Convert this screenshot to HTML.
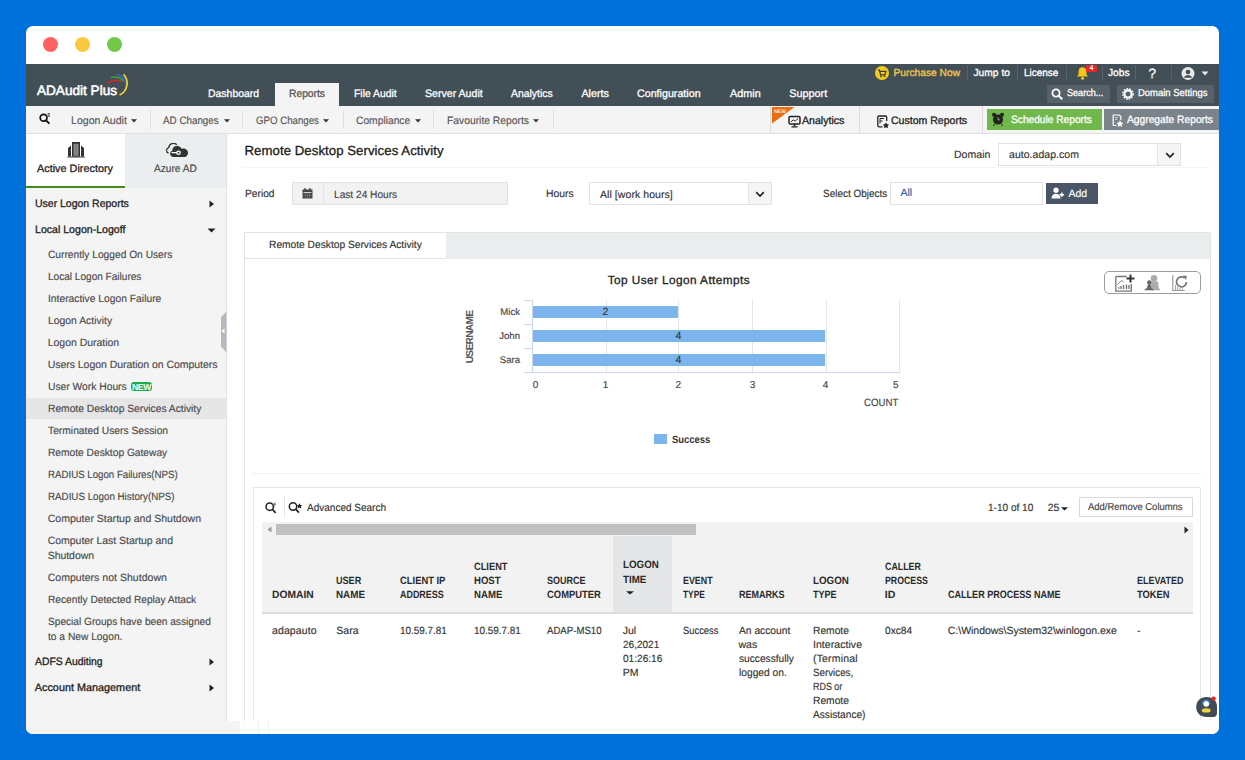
<!DOCTYPE html><html><head><meta charset="utf-8"><style>
*{box-sizing:border-box;margin:0;padding:0}
html,body{width:1245px;height:760px;overflow:hidden}
body{background:#0070DA;font-family:"Liberation Sans",sans-serif;position:relative;text-rendering:geometricPrecision}
.b{position:absolute;display:block}
.t{position:absolute;white-space:nowrap;line-height:normal}
#pg{position:absolute;left:0;top:0;width:1245px;height:760px;clip-path:inset(26px round 7px)}

</style></head><body>
<div class="b" style="left:26px;top:26px;width:1193px;height:708px;background:#fff;border-radius:7px"></div>
<div id="pg">
<div class="b" style="left:43px;top:37px;width:15px;height:15px;border-radius:50%;background:#FF6162"></div>
<div class="b" style="left:75px;top:37px;width:15px;height:15px;border-radius:50%;background:#FBC93F"></div>
<div class="b" style="left:107px;top:37px;width:15px;height:15px;border-radius:50%;background:#73C84A"></div>
<div class="b" style="left:26px;top:64px;width:1193px;height:42px;background:#434F56"></div>
<div class="b" style="left:275px;top:83px;width:64px;height:23px;background:#F4F4F4"></div>
<svg class="b" style="left:100px;top:68px;" width="34" height="30" viewBox="0 0 34 30">
<path d="M7.5 15.5 A 12 10 0 0 1 22 13.5" stroke="#D42A25" stroke-width="1.6" fill="none"/>
<path d="M11 9.5 A 13 11 0 0 1 24.5 13.5" stroke="#3C9C3A" stroke-width="1.6" fill="none"/>
<path d="M17 6 A 14 14 0 0 1 26.3 21" stroke="#2F6DC0" stroke-width="1.6" fill="none"/>
<path d="M23.6 6.3 A 13 13 0 0 1 19.6 27" stroke="#F3D02A" stroke-width="1.7" fill="none"/>
</svg>
<svg class="b" style="left:875px;top:66px;" width="14" height="14" viewBox="0 0 14 14"><circle cx="7" cy="7" r="7" fill="#F4CD1A"/><path d="M3 4.2h1.4l1.2 4.6h4.3l1-3.4H5" stroke="#3a3a3a" stroke-width="1.3" fill="none"/><circle cx="6" cy="10.3" r="0.9" fill="#3a3a3a"/><circle cx="9.5" cy="10.3" r="0.9" fill="#3a3a3a"/></svg>
<div class="b" style="left:967px;top:65px;width:1px;height:16px;background:#56616A"></div>
<div class="b" style="left:1017px;top:65px;width:1px;height:16px;background:#56616A"></div>
<div class="b" style="left:1066px;top:65px;width:1px;height:16px;background:#56616A"></div>
<div class="b" style="left:1102px;top:65px;width:1px;height:16px;background:#56616A"></div>
<div class="b" style="left:1135px;top:65px;width:1px;height:16px;background:#56616A"></div>
<div class="b" style="left:1171px;top:65px;width:1px;height:16px;background:#56616A"></div>
<svg class="b" style="left:1076px;top:66px;" width="13" height="14" viewBox="0 0 13 14"><path d="M6.5 1.2c-2.6 0-4 2-4 4.4v3L1 10.6h11L10.5 8.6v-3c0-2.4-1.4-4.4-4-4.4z" fill="#F5C518"/><circle cx="6.5" cy="12.2" r="1.5" fill="#F5C518"/></svg>
<div class="b" style="left:1086px;top:65px;width:11px;height:7px;background:#E5262A;border-radius:1px"></div>
<svg class="b" style="left:1181px;top:67px;" width="14" height="13" viewBox="0 0 14 13"><circle cx="7" cy="6.5" r="6.5" fill="#E8E8E8"/><circle cx="7" cy="5" r="2.3" fill="#444E56"/><path d="M2.8 10.8c1-2 2.4-2.8 4.2-2.8s3.2.8 4.2 2.8" fill="#444E56"/></svg>
<svg class="b" style="left:1201px;top:71px;" width="8" height="5" viewBox="0 0 8 5"><path d="M0.5 0.5h7L4 4.5z" fill="#E8E8E8"/></svg>
<div class="b" style="left:1047px;top:85px;width:63px;height:18px;background:#56616A;border-radius:1px"></div>
<svg class="b" style="left:1051px;top:88px;" width="13" height="13" viewBox="0 0 13 13"><circle cx="5" cy="5" r="3.6" stroke="#fff" stroke-width="1.8" fill="none"/><path d="M7.6 7.6l3.6 3.6" stroke="#fff" stroke-width="2"/></svg>
<div class="b" style="left:1117px;top:85px;width:97px;height:18px;background:#56616A;border-radius:1px"></div>
<svg class="b" style="left:1122px;top:88px;" width="12" height="12" viewBox="0 0 12 12"><circle cx="6" cy="6" r="3.6" stroke="#fff" stroke-width="2.2" fill="none"/><circle cx="6" cy="6" r="5.2" stroke="#fff" stroke-width="1.4" stroke-dasharray="1.6 1.2" fill="none"/></svg>
<div class="b" style="left:26px;top:106px;width:1193px;height:28px;background:#F4F4F4;border-bottom:1px solid #E0E0E0"></div>
<svg class="b" style="left:39px;top:113px;" width="12" height="12" viewBox="0 0 12 12"><circle cx="4.6" cy="4.8" r="3.4" stroke="#111" stroke-width="1.7" fill="none"/><path d="M7 7.3l3.4 3.4" stroke="#111" stroke-width="1.9"/><path d="M8.6 0.6h2.2M8.6 2h2.2M9.3 3.4h1.5" stroke="#111" stroke-width="0.8"/></svg>
<svg class="b" style="left:131px;top:119px;" width="6" height="4" viewBox="0 0 6 4"><path d="M0 0.3h6L3.0 3.6z" fill="#333"/></svg>
<svg class="b" style="left:224px;top:119px;" width="6" height="4" viewBox="0 0 6 4"><path d="M0 0.3h6L3.0 3.6z" fill="#333"/></svg>
<svg class="b" style="left:323px;top:119px;" width="6" height="4" viewBox="0 0 6 4"><path d="M0 0.3h6L3.0 3.6z" fill="#333"/></svg>
<svg class="b" style="left:415px;top:119px;" width="6" height="4" viewBox="0 0 6 4"><path d="M0 0.3h6L3.0 3.6z" fill="#333"/></svg>
<svg class="b" style="left:533px;top:119px;" width="6" height="4" viewBox="0 0 6 4"><path d="M0 0.3h6L3.0 3.6z" fill="#333"/></svg>
<div class="b" style="left:150px;top:110px;width:1px;height:19px;background:#E0E0E0"></div>
<div class="b" style="left:242px;top:110px;width:1px;height:19px;background:#E0E0E0"></div>
<div class="b" style="left:343px;top:110px;width:1px;height:19px;background:#E0E0E0"></div>
<div class="b" style="left:433px;top:110px;width:1px;height:19px;background:#E0E0E0"></div>
<div class="b" style="left:553px;top:110px;width:1px;height:19px;background:#E0E0E0"></div>
<div class="b" style="left:770px;top:106px;width:1px;height:27px;background:#DEDEDE"></div>
<div class="b" style="left:859px;top:106px;width:1px;height:27px;background:#DEDEDE"></div>
<div class="b" style="left:982px;top:106px;width:1px;height:27px;background:#DEDEDE"></div>
<svg class="b" style="left:772px;top:107px;" width="23" height="17" viewBox="0 0 23 17"><path d="M0 0H22.5L0 16.6z" fill="#EC6D0E"/><text x="2.2" y="6" font-family="Liberation Sans" font-size="5" font-weight="700" fill="#fff" opacity="0.9">NEW</text></svg>
<svg class="b" style="left:788px;top:115px;" width="13" height="13" viewBox="0 0 13 13"><rect x="1" y="1.5" width="11" height="7.5" rx="1.3" stroke="#222" stroke-width="1.5" fill="none"/><path d="M3 7l2.2-2.2 2 1.4 2.8-2.8" stroke="#222" stroke-width="1" fill="none"/><path d="M6.5 9v2.5" stroke="#222" stroke-width="1.6"/><path d="M3.5 11.8h6" stroke="#222" stroke-width="1.3"/></svg>
<svg class="b" style="left:877px;top:115px;" width="12" height="13" viewBox="0 0 12 13"><path d="M5.5 11.8H2a1.2 1.2 0 0 1-1.2-1.2V2.2A1.2 1.2 0 0 1 2 1h6.5a1.2 1.2 0 0 1 1.2 1.2V6" stroke="#222" stroke-width="1.3" fill="none"/><path d="M3 3.5h4M3 3.5v5M3 6h2.5" stroke="#222" stroke-width="1"/><path d="M9 7.2l1.05 2.1 2.2.3-1.6 1.5.4 2.2-2.05-1.1-2.05 1.1.4-2.2-1.6-1.5 2.2-.3z" fill="#222"/></svg>
<div class="b" style="left:987px;top:109px;width:115px;height:21px;background:#70B84C"></div>
<svg class="b" style="left:991px;top:112px;" width="14" height="14" viewBox="0 0 14 14"><circle cx="7" cy="7.6" r="5" fill="#222"/><circle cx="3" cy="2.8" r="2" fill="#222"/><circle cx="11" cy="2.8" r="2" fill="#222"/><path d="M7 5.2v2.6h2" stroke="#70B84C" stroke-width="1" fill="none"/><path d="M3.5 12.5l-1 1.2M10.5 12.5l1 1.2" stroke="#222" stroke-width="1.2"/></svg>
<div class="b" style="left:1104px;top:109px;width:115px;height:21px;background:#7A8389"></div>
<svg class="b" style="left:1112px;top:114px;" width="12" height="13" viewBox="0 0 12 13"><path d="M4.5 11.5H1.2V1h6l1.6 1.6v3.5" stroke="#fff" stroke-width="1.2" fill="none"/><path d="M3 3.5h3M3 5.5h2" stroke="#ddd" stroke-width="0.9"/><path d="M8 6.3l1.2 2.3 2.4.3-1.8 1.7.4 2.4-2.2-1.2-2.2 1.2.4-2.4-1.8-1.7 2.4-.3z" fill="#fff"/></svg>
<div class="b" style="left:26px;top:134px;width:200px;height:600px;background:#F4F4F4"></div>
<div class="b" style="left:226px;top:134px;width:1px;height:587px;background:#E3E3E3"></div>
<div class="b" style="left:26px;top:134px;width:99px;height:54px;background:#fff"></div>
<div class="b" style="left:26px;top:186px;width:99px;height:2px;background:#3E8E1E"></div>
<div class="b" style="left:125px;top:134px;width:101px;height:54px;background:#EAEEEF"></div>
<svg class="b" style="left:66px;top:141px;" width="20" height="17" viewBox="0 0 20 17"><path d="M2 7L5 4.4V15.6H2z" fill="#333"/><path d="M18 7L15 4.4V15.6H18z" fill="#333"/><rect x="6" y="1" width="8" height="14.6" fill="#333"/><rect x="7.6" y="2.8" width="4.8" height="12" fill="#9a9a9a"/><path d="M9.2 3v12M10.8 3v12" stroke="#555" stroke-width="0.6"/><path d="M1.5 16h17.2" stroke="#333" stroke-width="1.2"/></svg>
<svg class="b" style="left:165px;top:143px;" width="23" height="15" viewBox="0 0 23 15"><path d="M3.6 10.2a2.9 2.9 0 0 1 .2-5.6a4.6 4.6 0 0 1 8-2.8" stroke="#333" stroke-width="1.3" fill="none"/><path d="M8.2 14a3.2 3.2 0 0 1-1-6.2a5 5 0 0 1 9.5-2a4.2 4.2 0 0 1 3.6 8.2z" fill="#333"/><path d="M6.5 9.7h6" stroke="#fff" stroke-width="1.3"/><circle cx="13.5" cy="9.7" r="2.3" fill="#fff"/><circle cx="13.5" cy="9.7" r="1" fill="#333"/></svg>
<svg class="b" style="left:209px;top:200px;" width="6" height="8" viewBox="0 0 6 8"><path d="M0.5 0.5L5 4L0.5 7.5z" fill="#222"/></svg>
<svg class="b" style="left:207px;top:228px;" width="9" height="5" viewBox="0 0 9 5"><path d="M0.5 0.5h8L4.5 4.5z" fill="#222"/></svg>
<div class="b" style="left:26px;top:398px;width:200px;height:21px;background:#E6E6E6"></div>
<div class="b" style="left:131px;top:382px;width:21px;height:9px;background:#1DAE4B;border-radius:3px"></div>
<svg class="b" style="left:209px;top:658px;" width="6" height="8" viewBox="0 0 6 8"><path d="M0.5 0.5L5 4L0.5 7.5z" fill="#222"/></svg>
<svg class="b" style="left:209px;top:684px;" width="6" height="8" viewBox="0 0 6 8"><path d="M0.5 0.5L5 4L0.5 7.5z" fill="#222"/></svg>
<svg class="b" style="left:220px;top:311px;" width="7" height="42" viewBox="0 0 7 42"><path d="M1 6L6.5 0.5V41.5L1 35.5z" fill="#B3BAC1"/><path d="M4.5 17.5v5l-3-2.5z" fill="#fff"/></svg>
<div class="b" style="left:242px;top:167px;width:968px;height:1px;background:#F4F4F4"></div>
<div class="b" style="left:292px;top:182px;width:216px;height:23px;background:#F2F2F2;border:1px solid #E2E2E2"></div>
<div class="b" style="left:323px;top:183px;width:1px;height:21px;background:#E2E2E2"></div>
<svg class="b" style="left:302px;top:188px;" width="11" height="11" viewBox="0 0 11 11"><rect x="0.5" y="1.5" width="10" height="9" fill="#444"/><path d="M3 0v3M8 0v3" stroke="#444" stroke-width="1.3"/><path d="M1.5 4.5h8" stroke="#F2F2F2" stroke-width="0.8"/><path d="M3.5 5v5M5.5 5v5M7.5 5v5M1 7.3h9" stroke="#888" stroke-width="0.5"/></svg>
<div class="b" style="left:589px;top:182px;width:183px;height:23px;background:#fff;border:1px solid #E2E2E2"></div>
<div class="b" style="left:748px;top:183px;width:23px;height:21px;background:#F5F5F5;border-left:1px solid #E5E5E5"></div>
<svg class="b" style="left:755px;top:191px;" width="10" height="7" viewBox="0 0 10 7"><path d="M1.2 1.2L5 5L8.8 1.2" stroke="#222" stroke-width="1.7" fill="none"/></svg>
<div class="b" style="left:998px;top:143px;width:183px;height:23px;background:#fff;border:1px solid #E2E2E2"></div>
<div class="b" style="left:1157px;top:144px;width:23px;height:21px;background:#F5F5F5;border-left:1px solid #E5E5E5"></div>
<svg class="b" style="left:1165px;top:152px;" width="10" height="7" viewBox="0 0 10 7"><path d="M1.2 1.2L5 5L8.8 1.2" stroke="#222" stroke-width="1.7" fill="none"/></svg>
<div class="b" style="left:890px;top:182px;width:153px;height:23px;background:#fff;border:1px solid #E2E2E2"></div>
<div class="b" style="left:1046px;top:183px;width:52px;height:21px;background:#4A5667"></div>
<svg class="b" style="left:1051px;top:187px;" width="14" height="12" viewBox="0 0 14 12"><circle cx="5" cy="3.2" r="2.6" fill="#fff"/><path d="M0.5 11.5c0-3 2-4.8 4.5-4.8s4.5 1.8 4.5 4.8z" fill="#fff"/><path d="M10.8 5.5v4.5M8.6 7.8h4.5" stroke="#fff" stroke-width="1.4"/></svg>
<div class="b" style="left:244px;top:232px;width:967px;height:528px;border:1px solid #E3E3E3;background:#fff"></div>
<div class="b" style="left:446px;top:232px;width:765px;height:27px;background:#EAEEEF;border-top:1px solid #E3E3E3;border-right:1px solid #E3E3E3"></div>
<div class="b" style="left:244px;top:258px;width:202px;height:1px;background:#E3E3E3"></div>
<div class="b" style="left:606px;top:300px;width:1px;height:72px;background:#E6E6E6"></div>
<div class="b" style="left:678px;top:300px;width:1px;height:72px;background:#E6E6E6"></div>
<div class="b" style="left:752px;top:300px;width:1px;height:72px;background:#E6E6E6"></div>
<div class="b" style="left:826px;top:300px;width:1px;height:72px;background:#E6E6E6"></div>
<div class="b" style="left:899px;top:300px;width:1px;height:72px;background:#E6E6E6"></div>
<div class="b" style="left:532px;top:300px;width:1px;height:73px;background:#CCD6EB"></div>
<div class="b" style="left:524px;top:372px;width:376px;height:1px;background:#CCD6EB"></div>
<div class="b" style="left:524px;top:300px;width:8px;height:1px;background:#CCD6EB"></div>
<div class="b" style="left:524px;top:324px;width:8px;height:1px;background:#CCD6EB"></div>
<div class="b" style="left:524px;top:348px;width:8px;height:1px;background:#CCD6EB"></div>
<div class="b" style="left:533px;top:306px;width:145px;height:12px;background:#7CB5EC"></div>
<div class="b" style="left:533px;top:330px;width:292px;height:12px;background:#7CB5EC"></div>
<div class="b" style="left:533px;top:354px;width:292px;height:12px;background:#7CB5EC"></div>
<div class="t" style="left:470.5px;top:336.5px;font-size:10.2px;font-weight:700;color:#555;transform:translate(-50%,-50%) rotate(-90deg);line-height:10px;letter-spacing:-0.7px">USERNAME</div>
<div class="b" style="left:654px;top:434px;width:13px;height:10px;background:#7CB5EC"></div>
<div class="b" style="left:1104px;top:271px;width:97px;height:23px;border:1px solid #9C9C9C;border-radius:5px"></div>
<svg class="b" style="left:1115px;top:274px;" width="21" height="18" viewBox="0 0 21 18"><path d="M0.8 2.5h11M0.8 2.5v14.7h15.5V10" stroke="#777" stroke-width="1.3" fill="none"/><path d="M2.5 10.5l4-4 2 1.5" stroke="#777" stroke-width="0.9" fill="none"/><path d="M3 14h1.5M6 12v3M8.5 11v4M11.5 10.5v4.5M14 11v4" stroke="#777" stroke-width="1.4"/><path d="M15.5 0.5v8M11.5 4.5h8" stroke="#333" stroke-width="2"/></svg>
<svg class="b" style="left:1143px;top:274px;" width="18" height="17" viewBox="0 0 18 17"><circle cx="11" cy="4.3" r="3.3" fill="#ababab"/><path d="M8.6 7.2h5c1 0 1.5 .8 1.6 2l.4 4.5 2 2.6H7.5z" fill="#ababab"/><circle cx="6.3" cy="8.6" r="2.3" fill="#666"/><path d="M4.8 10.8h3l.3 3 3.2 2.5H1l3-2.5z" fill="#666"/></svg>
<svg class="b" style="left:1172px;top:274px;" width="17" height="17" viewBox="0 0 17 17"><path d="M0.8 1v15.5h12" stroke="#999" stroke-width="1.1" fill="none"/><path d="M3.5 16v-5M5.5 16v-3M8 16v-2M10.5 16v-1.5" stroke="#999" stroke-width="0.9"/><path d="M14.5 8a5 5 0 1 1-1.8-4" stroke="#777" stroke-width="1.7" fill="none"/><path d="M11.2 1.3l3.8 1-1.2 3.7z" fill="#777"/></svg>
<div class="b" style="left:253px;top:473px;width:948px;height:1px;border-top:1px dotted #E6E6E6"></div>
<div class="b" style="left:253px;top:487px;width:948px;height:273px;border:1px solid #E6E6E6;background:#fff"></div>
<svg class="b" style="left:264px;top:500px;" width="14" height="15" viewBox="0 0 14 15"><circle cx="5.7" cy="6.7" r="3.7" stroke="#222" stroke-width="1.5" fill="none"/><path d="M8.4 9.4l3.3 3.4" stroke="#222" stroke-width="1.7"/><path d="M9.6 3.2h2.2M10 4.6h1.8M9.8 6h1.4" stroke="#444" stroke-width="0.8"/></svg>
<div class="b" style="left:284px;top:497px;width:1px;height:20px;background:#E5E5E5"></div>
<svg class="b" style="left:288px;top:500px;" width="15" height="15" viewBox="0 0 15 15"><circle cx="5" cy="6.5" r="3.7" stroke="#222" stroke-width="1.5" fill="none"/><path d="M7.7 9.2l3.3 3.4" stroke="#222" stroke-width="1.7"/><path d="M11.5 3.3l.9 1.8 1.9.2-1.4 1.3.4 1.9-1.8-1-1.8 1 .4-1.9-1.4-1.3 1.9-.2z" fill="#222"/></svg>
<svg class="b" style="left:1061px;top:507px;" width="7" height="4" viewBox="0 0 7 4"><path d="M0 0.3h7L3.5 3.6z" fill="#222"/></svg>
<div class="b" style="left:1079px;top:497px;width:114px;height:20px;background:#fff;border:1px solid #DADADA"></div>
<div class="b" style="left:262px;top:522px;width:931px;height:91px;background:#F2F2F2"></div>
<div class="b" style="left:613px;top:536px;width:59px;height:76px;background:#E4E6E8"></div>
<div class="b" style="left:262px;top:612px;width:931px;height:2px;background:#DDDDDD"></div>
<div class="b" style="left:276px;top:524px;width:420px;height:11px;background:#C1C1C1"></div>
<svg class="b" style="left:267px;top:526px;" width="5" height="7" viewBox="0 0 5 7"><path d="M4.5 0.5v6L0.5 3.5z" fill="#999"/></svg>
<svg class="b" style="left:1184px;top:526px;" width="5" height="8" viewBox="0 0 5 8"><path d="M0.5 0.5v7L4.5 4z" fill="#222"/></svg>
<svg class="b" style="left:626px;top:591px;" width="8" height="4" viewBox="0 0 8 4"><path d="M0 0.3h8L4.0 3.6z" fill="#222"/></svg>
<div class="b" style="left:26px;top:721px;width:214px;height:13px;background:#F4F4F4"></div>
<div class="b" style="left:240px;top:721px;width:979px;height:13px;background:#fff"></div>
<div class="b" style="left:258px;top:721px;width:1px;height:13px;background:#F0F0F0"></div>
<div class="b" style="left:268px;top:721px;width:1px;height:13px;background:#F0F0F0"></div>
<svg class="b" style="left:1195px;top:695px;" width="24" height="23" viewBox="0 0 24 23"><path d="M11.5 2C5.5 2 1.2 6 1.2 12c0 6 4.3 10 10.3 10h6.5c2.6 0 4-1.4 4-4V11.5C22 5.8 17.5 2 11.5 2z" fill="#414B55"/><circle cx="11.2" cy="8.8" r="2.9" fill="#fff"/><path d="M7.4 9.2a3.8 3.8 0 0 1 7.6 0" stroke="#3A8FD8" stroke-width="1.2" fill="none"/><ellipse cx="11.2" cy="15.4" rx="4.4" ry="2.2" fill="#F4D03F"/><circle cx="18.5" cy="3.8" r="2.3" fill="#E8262C"/></svg>
<div class="t" id="t0" style="top:82.69px;font-size:13.6px;font-weight:400;-webkit-text-stroke:0.3px #fff;color:#fff;letter-spacing:-0.009px;left:37px;-webkit-text-stroke:0.55px #fff;">ADAudit Plus</div>
<div class="t" id="t1" style="top:87.73px;font-size:10.8px;font-weight:400;-webkit-text-stroke:0.3px #fff;color:#fff;transform:scaleX(0.9673);transform-origin:0 0;left:208.4px;">Dashboard</div>
<div class="t" id="t2" style="top:87.73px;font-size:10.8px;font-weight:400;-webkit-text-stroke:0.3px #fff;color:#fff;transform:scaleX(0.9612);transform-origin:0 0;left:354px;">File Audit</div>
<div class="t" id="t3" style="top:87.73px;font-size:10.8px;font-weight:400;-webkit-text-stroke:0.3px #fff;color:#fff;transform:scaleX(0.9808);transform-origin:0 0;left:425.3px;">Server Audit</div>
<div class="t" id="t4" style="top:87.73px;font-size:10.8px;font-weight:400;-webkit-text-stroke:0.3px #fff;color:#fff;transform:scaleX(0.9625);transform-origin:0 0;left:511.3px;">Analytics</div>
<div class="t" id="t5" style="top:87.73px;font-size:10.8px;font-weight:400;-webkit-text-stroke:0.3px #fff;color:#fff;letter-spacing:-0.022px;left:581.4px;">Alerts</div>
<div class="t" id="t6" style="top:87.73px;font-size:10.8px;font-weight:400;-webkit-text-stroke:0.3px #fff;color:#fff;transform:scaleX(0.9901);transform-origin:0 0;left:637.4px;">Configuration</div>
<div class="t" id="t7" style="top:87.73px;font-size:10.8px;font-weight:400;-webkit-text-stroke:0.3px #fff;color:#fff;letter-spacing:0.023px;left:730px;">Admin</div>
<div class="t" id="t8" style="top:87.73px;font-size:10.8px;font-weight:400;-webkit-text-stroke:0.3px #fff;color:#fff;letter-spacing:0.029px;left:789.2px;">Support</div>
<div class="t" id="t9" style="top:87.73px;font-size:10.8px;font-weight:400;-webkit-text-stroke:0.3px #555;color:#555;transform:scaleX(0.9521);transform-origin:0 0;left:289px;">Reports</div>
<div class="t" id="t10" style="top:67.77px;font-size:10.2px;font-weight:400;-webkit-text-stroke:0.3px #F2C94C;color:#F2C94C;letter-spacing:0.023px;left:893.5px;">Purchase Now</div>
<div class="t" id="t11" style="top:67.77px;font-size:10.2px;font-weight:400;-webkit-text-stroke:0.3px #fff;color:#fff;letter-spacing:0.058px;left:973.4px;">Jump to</div>
<div class="t" id="t12" style="top:67.77px;font-size:10.2px;font-weight:400;-webkit-text-stroke:0.3px #fff;color:#fff;transform:scaleX(0.9794);transform-origin:0 0;left:1024.4px;">License</div>
<div class="t" id="t13" style="top:64.97px;font-size:7px;font-weight:700;color:#fff;left:1091.5px;transform:translateX(-50%);">4</div>
<div class="t" id="t14" style="top:67.77px;font-size:10.2px;font-weight:400;-webkit-text-stroke:0.3px #fff;color:#fff;left:1108px;">Jobs</div>
<div class="t" id="t15" style="top:65.78px;font-size:13.5px;font-weight:400;-webkit-text-stroke:0.3px #fff;color:#fff;left:1148.5px;">?</div>
<div class="t" id="t16" style="top:87.55px;font-size:10px;font-weight:400;-webkit-text-stroke:0.3px #fff;color:#fff;transform:scaleX(0.9093);transform-origin:0 0;left:1066.6px;">Search...</div>
<div class="t" id="t17" style="top:87.55px;font-size:10px;font-weight:400;-webkit-text-stroke:0.3px #fff;color:#fff;transform:scaleX(0.9472);transform-origin:0 0;left:1137.6px;">Domain Settings</div>
<div class="t" id="t18" style="top:114.53px;font-size:10.8px;font-weight:400;-webkit-text-stroke:0.15px #555;color:#555;transform:scaleX(0.9799);transform-origin:0 0;left:70.5px;">Logon Audit</div>
<div class="t" id="t19" style="top:114.53px;font-size:10.8px;font-weight:400;-webkit-text-stroke:0.15px #555;color:#555;transform:scaleX(0.9099);transform-origin:0 0;left:163px;">AD Changes</div>
<div class="t" id="t20" style="top:114.53px;font-size:10.8px;font-weight:400;-webkit-text-stroke:0.15px #555;color:#555;transform:scaleX(0.8958);transform-origin:0 0;left:255.8px;">GPO Changes</div>
<div class="t" id="t21" style="top:114.53px;font-size:10.8px;font-weight:400;-webkit-text-stroke:0.15px #555;color:#555;transform:scaleX(0.9506);transform-origin:0 0;left:355.7px;">Compliance</div>
<div class="t" id="t22" style="top:114.53px;font-size:10.8px;font-weight:400;-webkit-text-stroke:0.15px #555;color:#555;transform:scaleX(0.9556);transform-origin:0 0;left:447.2px;">Favourite Reports</div>
<div class="t" id="t23" style="top:115.23px;font-size:10.8px;font-weight:400;-webkit-text-stroke:0.3px #222;color:#222;transform:scaleX(0.9811);transform-origin:0 0;left:801.6px;">Analytics</div>
<div class="t" id="t24" style="top:115.23px;font-size:10.8px;font-weight:400;-webkit-text-stroke:0.3px #222;color:#222;transform:scaleX(0.9754);transform-origin:0 0;left:890.9px;">Custom Reports</div>
<div class="t" id="t25" style="top:113.73px;font-size:10.8px;font-weight:400;-webkit-text-stroke:0.3px #fff;color:#fff;transform:scaleX(0.9426);transform-origin:0 0;left:1010.5px;">Schedule Reports</div>
<div class="t" id="t26" style="top:113.73px;font-size:10.8px;font-weight:400;-webkit-text-stroke:0.3px #fff;color:#fff;transform:scaleX(0.9488);transform-origin:0 0;left:1127px;">Aggregate Reports</div>
<div class="t" id="t27" style="top:163.23px;font-size:10.8px;font-weight:400;-webkit-text-stroke:0.3px #222;color:#222;letter-spacing:0.026px;left:37px;">Active Directory</div>
<div class="t" id="t28" style="top:163.23px;font-size:10.8px;font-weight:400;-webkit-text-stroke:0.15px #444;color:#444;transform:scaleX(0.9362);transform-origin:0 0;left:154px;">Azure AD</div>
<div class="t" id="t29" style="top:198.03px;font-size:10.8px;font-weight:400;-webkit-text-stroke:0.3px #222;color:#222;transform:scaleX(0.9708);transform-origin:0 0;left:34.9px;">User Logon Reports</div>
<div class="t" id="t30" style="top:223.93px;font-size:10.8px;font-weight:400;-webkit-text-stroke:0.3px #222;color:#222;transform:scaleX(0.9798);transform-origin:0 0;left:34.9px;">Local Logon-Logoff</div>
<div class="t" id="t31" style="top:248.50px;font-size:10.5px;font-weight:400;-webkit-text-stroke:0.15px #4a4a4a;color:#4a4a4a;transform:scaleX(0.9725);transform-origin:0 0;left:47.7px;">Currently Logged On Users</div>
<div class="t" id="t32" style="top:270.50px;font-size:10.5px;font-weight:400;-webkit-text-stroke:0.15px #4a4a4a;color:#4a4a4a;transform:scaleX(0.9581);transform-origin:0 0;left:47.7px;">Local Logon Failures</div>
<div class="t" id="t33" style="top:292.50px;font-size:10.5px;font-weight:400;-webkit-text-stroke:0.15px #4a4a4a;color:#4a4a4a;transform:scaleX(0.9803);transform-origin:0 0;left:47.7px;">Interactive Logon Failure</div>
<div class="t" id="t34" style="top:314.50px;font-size:10.5px;font-weight:400;-webkit-text-stroke:0.15px #4a4a4a;color:#4a4a4a;transform:scaleX(0.9892);transform-origin:0 0;left:47.7px;">Logon Activity</div>
<div class="t" id="t35" style="top:336.50px;font-size:10.5px;font-weight:400;-webkit-text-stroke:0.15px #4a4a4a;color:#4a4a4a;letter-spacing:-0.024px;left:47.7px;">Logon Duration</div>
<div class="t" id="t36" style="top:358.50px;font-size:10.5px;font-weight:400;-webkit-text-stroke:0.15px #4a4a4a;color:#4a4a4a;letter-spacing:-0.038px;left:47.7px;">Users Logon Duration on Computers</div>
<div class="t" id="t37" style="top:380.50px;font-size:10.5px;font-weight:400;-webkit-text-stroke:0.15px #4a4a4a;color:#4a4a4a;transform:scaleX(0.9797);transform-origin:0 0;left:47.7px;">User Work Hours</div>
<div class="t" id="t38" style="top:402.50px;font-size:10.5px;font-weight:400;-webkit-text-stroke:0.15px #4a4a4a;color:#4a4a4a;transform:scaleX(0.9765);transform-origin:0 0;left:47.7px;">Remote Desktop Services Activity</div>
<div class="t" id="t39" style="top:425.20px;font-size:10.5px;font-weight:400;-webkit-text-stroke:0.15px #4a4a4a;color:#4a4a4a;transform:scaleX(0.9799);transform-origin:0 0;left:47.7px;">Terminated Users Session</div>
<div class="t" id="t40" style="top:447.30px;font-size:10.5px;font-weight:400;-webkit-text-stroke:0.15px #4a4a4a;color:#4a4a4a;transform:scaleX(0.9726);transform-origin:0 0;left:47.7px;">Remote Desktop Gateway</div>
<div class="t" id="t41" style="top:469.40px;font-size:10.5px;font-weight:400;-webkit-text-stroke:0.15px #4a4a4a;color:#4a4a4a;transform:scaleX(0.9222);transform-origin:0 0;left:47.7px;">RADIUS Logon Failures(NPS)</div>
<div class="t" id="t42" style="top:491.20px;font-size:10.5px;font-weight:400;-webkit-text-stroke:0.15px #4a4a4a;color:#4a4a4a;transform:scaleX(0.9311);transform-origin:0 0;left:47.7px;">RADIUS Logon History(NPS)</div>
<div class="t" id="t43" style="top:513.30px;font-size:10.5px;font-weight:400;-webkit-text-stroke:0.15px #4a4a4a;color:#4a4a4a;letter-spacing:0.013px;left:47.7px;">Computer Startup and Shutdown</div>
<div class="t" id="t44" style="top:535.40px;font-size:10.5px;font-weight:400;-webkit-text-stroke:0.15px #4a4a4a;color:#4a4a4a;letter-spacing:-0.032px;left:47.7px;">Computer Last Startup and</div>
<div class="t" id="t45" style="top:549.50px;font-size:10.5px;font-weight:400;-webkit-text-stroke:0.15px #4a4a4a;color:#4a4a4a;letter-spacing:-0.043px;left:47.7px;">Shutdown</div>
<div class="t" id="t46" style="top:572.20px;font-size:10.5px;font-weight:400;-webkit-text-stroke:0.15px #4a4a4a;color:#4a4a4a;letter-spacing:0.034px;left:47.7px;">Computers not Shutdown</div>
<div class="t" id="t47" style="top:594.30px;font-size:10.5px;font-weight:400;-webkit-text-stroke:0.15px #4a4a4a;color:#4a4a4a;transform:scaleX(0.9685);transform-origin:0 0;left:47.7px;">Recently Detected Replay Attack</div>
<div class="t" id="t48" style="top:616.40px;font-size:10.5px;font-weight:400;-webkit-text-stroke:0.15px #4a4a4a;color:#4a4a4a;transform:scaleX(0.9650);transform-origin:0 0;left:47.7px;">Special Groups have been assigned</div>
<div class="t" id="t49" style="top:631.00px;font-size:10.5px;font-weight:400;-webkit-text-stroke:0.15px #4a4a4a;color:#4a4a4a;transform:scaleX(0.9729);transform-origin:0 0;left:47.7px;">to a New Logon.</div>
<div class="t" id="t50" style="top:382.42px;font-size:8.6px;font-weight:700;color:#fff;left:141.5px;transform:translateX(-50%);letter-spacing:-0.3px;">NEW</div>
<div class="t" id="t51" style="top:656.13px;font-size:10.8px;font-weight:400;-webkit-text-stroke:0.3px #222;color:#222;transform:scaleX(0.9627);transform-origin:0 0;left:34.8px;">ADFS Auditing</div>
<div class="t" id="t52" style="top:682.43px;font-size:10.8px;font-weight:400;-webkit-text-stroke:0.3px #222;color:#222;letter-spacing:0.021px;left:34.8px;">Account Management</div>
<div class="t" id="t53" style="top:142.75px;font-size:13.2px;font-weight:400;-webkit-text-stroke:0.3px #1a1a1a;color:#1a1a1a;letter-spacing:0.059px;left:244.5px;">Remote Desktop Services Activity</div>
<div class="t" id="t54" style="top:187.50px;font-size:10.5px;font-weight:400;-webkit-text-stroke:0.15px #333;color:#333;transform:scaleX(0.9717);transform-origin:0 0;left:244.5px;">Period</div>
<div class="t" id="t55" style="top:188.50px;font-size:10.5px;font-weight:400;-webkit-text-stroke:0.15px #444;color:#444;transform:scaleX(0.9667);transform-origin:0 0;left:333.7px;">Last 24 Hours</div>
<div class="t" id="t56" style="top:187.50px;font-size:10.5px;font-weight:400;-webkit-text-stroke:0.15px #333;color:#333;transform:scaleX(0.9887);transform-origin:0 0;left:545.8px;">Hours</div>
<div class="t" id="t57" style="top:188.50px;font-size:10.5px;font-weight:400;-webkit-text-stroke:0.15px #333;color:#333;letter-spacing:0.068px;left:600px;">All [work hours]</div>
<div class="t" id="t58" style="top:149.20px;font-size:10.5px;font-weight:400;-webkit-text-stroke:0.15px #333;color:#333;letter-spacing:0.062px;left:953.9px;">Domain</div>
<div class="t" id="t59" style="top:149.20px;font-size:10.5px;font-weight:400;-webkit-text-stroke:0.15px #333;color:#333;letter-spacing:0.044px;left:1009px;">auto.adap.com</div>
<div class="t" id="t60" style="top:187.50px;font-size:10.5px;font-weight:400;-webkit-text-stroke:0.15px #333;color:#333;transform:scaleX(0.9483);transform-origin:0 0;left:822.5px;">Select Objects</div>
<div class="t" id="t61" style="top:187.00px;font-size:10.5px;font-weight:400;-webkit-text-stroke:0.15px #1F5FA6;color:#1F5FA6;left:900.5px;">All</div>
<div class="t" id="t62" style="top:188.00px;font-size:10.5px;font-weight:400;-webkit-text-stroke:0.15px #fff;color:#fff;left:1068.5px;">Add</div>
<div class="t" id="t63" style="top:238.50px;font-size:10.5px;font-weight:400;-webkit-text-stroke:0.15px #333;color:#333;transform:scaleX(0.9733);transform-origin:0 0;left:269px;">Remote Desktop Services Activity</div>
<div class="t" id="t64" style="top:273.02px;font-size:11.8px;font-weight:400;-webkit-text-stroke:0.3px #222;color:#222;letter-spacing:0.433px;left:607.7px;">Top User Logon Attempts</div>
<div class="t" id="t65" style="top:306.30px;font-size:10.5px;font-weight:400;-webkit-text-stroke:0.15px #333;color:#333;left:605.5px;transform:translateX(-50%);">2</div>
<div class="t" id="t66" style="top:330.30px;font-size:10.5px;font-weight:400;-webkit-text-stroke:0.15px #333;color:#333;left:678.5px;transform:translateX(-50%);">4</div>
<div class="t" id="t67" style="top:354.30px;font-size:10.5px;font-weight:400;-webkit-text-stroke:0.15px #333;color:#333;left:678.5px;transform:translateX(-50%);">4</div>
<div class="t" id="t68" style="top:307.11px;font-size:9.6px;font-weight:400;-webkit-text-stroke:0.15px #444;color:#444;right:725px;">Mick</div>
<div class="t" id="t69" style="top:331.11px;font-size:9.6px;font-weight:400;-webkit-text-stroke:0.15px #444;color:#444;right:725px;">John</div>
<div class="t" id="t70" style="top:355.11px;font-size:9.6px;font-weight:400;-webkit-text-stroke:0.15px #444;color:#444;right:725px;">Sara</div>
<div class="t" id="t71" style="top:379.75px;font-size:10px;font-weight:400;-webkit-text-stroke:0.15px #444;color:#444;left:535.5px;transform:translateX(-50%);">0</div>
<div class="t" id="t72" style="top:379.75px;font-size:10px;font-weight:400;-webkit-text-stroke:0.15px #444;color:#444;left:605.6px;transform:translateX(-50%);">1</div>
<div class="t" id="t73" style="top:379.75px;font-size:10px;font-weight:400;-webkit-text-stroke:0.15px #444;color:#444;left:678.3px;transform:translateX(-50%);">2</div>
<div class="t" id="t74" style="top:379.75px;font-size:10px;font-weight:400;-webkit-text-stroke:0.15px #444;color:#444;left:752.5px;transform:translateX(-50%);">3</div>
<div class="t" id="t75" style="top:379.75px;font-size:10px;font-weight:400;-webkit-text-stroke:0.15px #444;color:#444;left:825.6px;transform:translateX(-50%);">4</div>
<div class="t" id="t76" style="top:379.75px;font-size:10px;font-weight:400;-webkit-text-stroke:0.15px #444;color:#444;left:895.7px;transform:translateX(-50%);">5</div>
<div class="t" id="t77" style="top:396.70px;font-size:10.5px;font-weight:400;-webkit-text-stroke:0.15px #444;color:#444;transform:scaleX(0.9212);transform-origin:0 0;left:863.8px;">COUNT</div>
<div class="t" id="t78" style="top:434.00px;font-size:10.5px;font-weight:700;color:#333;transform:scaleX(0.8962);transform-origin:0 0;left:671.5px;">Success</div>
<div class="t" id="t79" style="top:501.50px;font-size:10.5px;font-weight:400;-webkit-text-stroke:0.15px #333;color:#333;transform:scaleX(0.9531);transform-origin:0 0;left:306.5px;">Advanced Search</div>
<div class="t" id="t80" style="top:501.50px;font-size:10.5px;font-weight:400;-webkit-text-stroke:0.15px #333;color:#333;transform:scaleX(0.9578);transform-origin:0 0;left:988.2px;">1-10 of 10</div>
<div class="t" id="t81" style="top:502.00px;font-size:10.5px;font-weight:400;-webkit-text-stroke:0.15px #333;color:#333;left:1047.7px;">25</div>
<div class="t" id="t82" style="top:501.95px;font-size:10px;font-weight:400;-webkit-text-stroke:0.15px #444;color:#444;transform:scaleX(0.9456);transform-origin:0 0;left:1088.4px;">Add/Remove Columns</div>
<div class="t" id="t83" style="top:589.41px;font-size:10.6px;font-weight:700;color:#2a2a2a;transform:scaleX(0.9705);transform-origin:0 0;left:272px;">DOMAIN</div>
<div class="t" id="t84" style="top:575.41px;font-size:10.6px;font-weight:700;color:#2a2a2a;transform:scaleX(0.8561);transform-origin:0 0;left:336.3px;">USER</div>
<div class="t" id="t85" style="top:589.41px;font-size:10.6px;font-weight:700;color:#2a2a2a;transform:scaleX(0.9294);transform-origin:0 0;left:336.3px;">NAME</div>
<div class="t" id="t86" style="top:575.41px;font-size:10.6px;font-weight:700;color:#2a2a2a;transform:scaleX(0.8864);transform-origin:0 0;left:400.1px;">CLIENT IP</div>
<div class="t" id="t87" style="top:589.41px;font-size:10.6px;font-weight:700;color:#2a2a2a;transform:scaleX(0.8434);transform-origin:0 0;left:400.1px;">ADDRESS</div>
<div class="t" id="t88" style="top:561.41px;font-size:10.6px;font-weight:700;color:#2a2a2a;transform:scaleX(0.8755);transform-origin:0 0;left:473.5px;">CLIENT</div>
<div class="t" id="t89" style="top:575.41px;font-size:10.6px;font-weight:700;color:#2a2a2a;transform:scaleX(0.9002);transform-origin:0 0;left:473.5px;">HOST</div>
<div class="t" id="t90" style="top:589.41px;font-size:10.6px;font-weight:700;color:#2a2a2a;transform:scaleX(0.9070);transform-origin:0 0;left:473.5px;">NAME</div>
<div class="t" id="t91" style="top:575.41px;font-size:10.6px;font-weight:700;color:#2a2a2a;transform:scaleX(0.8494);transform-origin:0 0;left:547px;">SOURCE</div>
<div class="t" id="t92" style="top:589.41px;font-size:10.6px;font-weight:700;color:#2a2a2a;transform:scaleX(0.8891);transform-origin:0 0;left:547px;">COMPUTER</div>
<div class="t" id="t93" style="top:559.41px;font-size:10.6px;font-weight:700;color:#2a2a2a;transform:scaleX(0.9216);transform-origin:0 0;left:622.7px;">LOGON</div>
<div class="t" id="t94" style="top:573.81px;font-size:10.6px;font-weight:700;color:#2a2a2a;transform:scaleX(0.9205);transform-origin:0 0;left:622.7px;">TIME</div>
<div class="t" id="t95" style="top:575.41px;font-size:10.6px;font-weight:700;color:#2a2a2a;transform:scaleX(0.8379);transform-origin:0 0;left:682.6px;">EVENT</div>
<div class="t" id="t96" style="top:589.41px;font-size:10.6px;font-weight:700;color:#2a2a2a;transform:scaleX(0.7914);transform-origin:0 0;left:682.6px;">TYPE</div>
<div class="t" id="t97" style="top:589.41px;font-size:10.6px;font-weight:700;color:#2a2a2a;transform:scaleX(0.8495);transform-origin:0 0;left:738.5px;">REMARKS</div>
<div class="t" id="t98" style="top:575.41px;font-size:10.6px;font-weight:700;color:#2a2a2a;transform:scaleX(0.9242);transform-origin:0 0;left:813px;">LOGON</div>
<div class="t" id="t99" style="top:589.41px;font-size:10.6px;font-weight:700;color:#2a2a2a;transform:scaleX(0.8529);transform-origin:0 0;left:813px;">TYPE</div>
<div class="t" id="t100" style="top:561.41px;font-size:10.6px;font-weight:700;color:#2a2a2a;transform:scaleX(0.8355);transform-origin:0 0;left:884.8px;">CALLER</div>
<div class="t" id="t101" style="top:575.41px;font-size:10.6px;font-weight:700;color:#2a2a2a;transform:scaleX(0.8280);transform-origin:0 0;left:884.8px;">PROCESS</div>
<div class="t" id="t102" style="top:589.41px;font-size:10.6px;font-weight:700;color:#2a2a2a;left:884.8px;">ID</div>
<div class="t" id="t103" style="top:589.41px;font-size:10.6px;font-weight:700;color:#2a2a2a;transform:scaleX(0.8533);transform-origin:0 0;left:947.8px;">CALLER PROCESS NAME</div>
<div class="t" id="t104" style="top:575.41px;font-size:10.6px;font-weight:700;color:#2a2a2a;transform:scaleX(0.8446);transform-origin:0 0;left:1137px;">ELEVATED</div>
<div class="t" id="t105" style="top:589.41px;font-size:10.6px;font-weight:700;color:#2a2a2a;transform:scaleX(0.8783);transform-origin:0 0;left:1137px;">TOKEN</div>
<div class="t" id="t106" style="top:624.50px;font-size:10.5px;font-weight:400;-webkit-text-stroke:0.15px #333;color:#333;letter-spacing:0.100px;left:272px;">adapauto</div>
<div class="t" id="t107" style="top:624.50px;font-size:10.5px;font-weight:400;-webkit-text-stroke:0.15px #333;color:#333;left:336.3px;">Sara</div>
<div class="t" id="t108" style="top:624.50px;font-size:10.5px;font-weight:400;-webkit-text-stroke:0.15px #333;color:#333;transform:scaleX(0.9428);transform-origin:0 0;left:400.1px;">10.59.7.81</div>
<div class="t" id="t109" style="top:624.50px;font-size:10.5px;font-weight:400;-webkit-text-stroke:0.15px #333;color:#333;transform:scaleX(0.9428);transform-origin:0 0;left:473.5px;">10.59.7.81</div>
<div class="t" id="t110" style="top:624.50px;font-size:10.5px;font-weight:400;-webkit-text-stroke:0.15px #333;color:#333;transform:scaleX(0.9155);transform-origin:0 0;left:547px;">ADAP-MS10</div>
<div class="t" id="t111" style="top:624.50px;font-size:10.5px;font-weight:400;-webkit-text-stroke:0.15px #333;color:#333;left:622.7px;">Jul</div>
<div class="t" id="t112" style="top:638.50px;font-size:10.5px;font-weight:400;-webkit-text-stroke:0.15px #333;color:#333;transform:scaleX(0.9560);transform-origin:0 0;left:622.7px;">26,2021</div>
<div class="t" id="t113" style="top:652.50px;font-size:10.5px;font-weight:400;-webkit-text-stroke:0.15px #333;color:#333;transform:scaleX(0.9615);transform-origin:0 0;left:622.7px;">01:26:16</div>
<div class="t" id="t114" style="top:666.50px;font-size:10.5px;font-weight:400;-webkit-text-stroke:0.15px #333;color:#333;left:622.7px;">PM</div>
<div class="t" id="t115" style="top:624.50px;font-size:10.5px;font-weight:400;-webkit-text-stroke:0.15px #333;color:#333;transform:scaleX(0.8920);transform-origin:0 0;left:682.6px;">Success</div>
<div class="t" id="t116" style="top:624.50px;font-size:10.5px;font-weight:400;-webkit-text-stroke:0.15px #333;color:#333;transform:scaleX(0.9763);transform-origin:0 0;left:738.5px;">An account</div>
<div class="t" id="t117" style="top:638.50px;font-size:10.5px;font-weight:400;-webkit-text-stroke:0.15px #333;color:#333;left:738.5px;">was</div>
<div class="t" id="t118" style="top:652.50px;font-size:10.5px;font-weight:400;-webkit-text-stroke:0.15px #333;color:#333;transform:scaleX(0.9680);transform-origin:0 0;left:738.5px;">successfully</div>
<div class="t" id="t119" style="top:666.50px;font-size:10.5px;font-weight:400;-webkit-text-stroke:0.15px #333;color:#333;transform:scaleX(0.9746);transform-origin:0 0;left:738.5px;">logged on.</div>
<div class="t" id="t120" style="top:624.50px;font-size:10.5px;font-weight:400;-webkit-text-stroke:0.15px #333;color:#333;transform:scaleX(0.9765);transform-origin:0 0;left:813px;">Remote</div>
<div class="t" id="t121" style="top:638.50px;font-size:10.5px;font-weight:400;-webkit-text-stroke:0.15px #333;color:#333;letter-spacing:0.055px;left:813px;">Interactive</div>
<div class="t" id="t122" style="top:652.50px;font-size:10.5px;font-weight:400;-webkit-text-stroke:0.15px #333;color:#333;letter-spacing:0.177px;left:813px;">(Terminal</div>
<div class="t" id="t123" style="top:666.50px;font-size:10.5px;font-weight:400;-webkit-text-stroke:0.15px #333;color:#333;transform:scaleX(0.9308);transform-origin:0 0;left:813px;">Services,</div>
<div class="t" id="t124" style="top:680.50px;font-size:10.5px;font-weight:400;-webkit-text-stroke:0.15px #333;color:#333;transform:scaleX(0.8508);transform-origin:0 0;left:813px;">RDS or</div>
<div class="t" id="t125" style="top:694.50px;font-size:10.5px;font-weight:400;-webkit-text-stroke:0.15px #333;color:#333;transform:scaleX(0.9765);transform-origin:0 0;left:813px;">Remote</div>
<div class="t" id="t126" style="top:708.50px;font-size:10.5px;font-weight:400;-webkit-text-stroke:0.15px #333;color:#333;transform:scaleX(0.9672);transform-origin:0 0;left:813px;">Assistance)</div>
<div class="t" id="t127" style="top:624.50px;font-size:10.5px;font-weight:400;-webkit-text-stroke:0.15px #333;color:#333;transform:scaleX(0.9668);transform-origin:0 0;left:884.8px;">0xc84</div>
<div class="t" id="t128" style="top:624.50px;font-size:10.5px;font-weight:400;-webkit-text-stroke:0.15px #333;color:#333;letter-spacing:-0.027px;left:947.8px;">C:\Windows\System32\winlogon.exe</div>
<div class="t" id="t129" style="top:624.50px;font-size:10.5px;font-weight:400;-webkit-text-stroke:0.15px #333;color:#333;left:1137px;">-</div>
</div></body></html>
